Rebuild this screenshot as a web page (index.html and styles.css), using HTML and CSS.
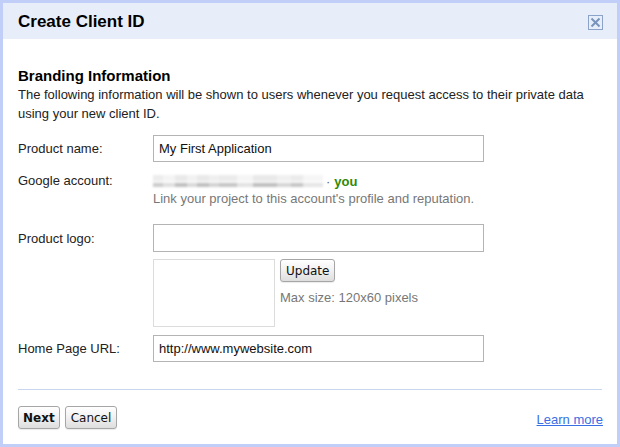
FILE: index.html
```html
<!DOCTYPE html>
<html>
<head>
<meta charset="utf-8">
<link rel="stylesheet" href="styles.css">
</head>
<body>
<div class="dialog">
  <div class="header">
    <div class="title">Create Client ID</div>
    <svg class="close" width="15" height="15" viewBox="0 0 15 15">
      <rect x="0.5" y="0.5" width="14" height="14" fill="none" stroke="#8ba3c9"/>
      <path d="M4.2 4.2 L10.8 10.8 M10.8 4.2 L4.2 10.8" stroke="#7893bd" stroke-width="2" stroke-linecap="square"/>
    </svg>
  </div>
  <div class="body">
    <h2 class="section">Branding Information</h2>
    <p class="desc">The following information will be shown to users whenever you request access to their private data using your new client ID.</p>

    <div class="form">
      <div class="row row-input">
        <div class="label">Product name:</div>
        <div class="field"><div class="input">My First Application</div></div>
      </div>

      <div class="row row-account">
        <div class="label">Google account:</div>
        <div class="field">
          <div class="account"><span class="blur"></span><span class="dot">·</span><span class="you">you</span></div>
          <div class="hint">Link your project to this account's profile and reputation.</div>
        </div>
      </div>

      <div class="row row-input row-logo">
        <div class="label">Product logo:</div>
        <div class="field"><div class="input"></div></div>
      </div>

      <div class="row row-preview">
        <div class="label"></div>
        <div class="field preview">
          <div class="logo-box"></div>
          <div class="logo-side">
            <button class="btn">Update</button>
            <div class="hint maxsize">Max size: 120x60 pixels</div>
          </div>
        </div>
      </div>

      <div class="row row-input row-url">
        <div class="label">Home Page URL:</div>
        <div class="field"><div class="input">http://www.mywebsite.com</div></div>
      </div>
    </div>

    <div class="sep"></div>

    <div class="footer">
      <div class="buttons">
        <button class="btn btn-primary">Next</button>
        <button class="btn">Cancel</button>
      </div>
      <a class="learn" href="#">Learn more</a>
    </div>
  </div>
</div>
</body>
</html>
```

FILE: styles.css
```css
html, body {
  margin: 0;
  padding: 0;
  background: #fff;
}

.dialog {
  width: 620px;
  height: 447px;
  box-sizing: border-box;
  border: 3px solid #c1cef8;
  background: #fff;
  display: flex;
  flex-direction: column;
  font-family: "Liberation Sans", Arial, sans-serif;
  font-size: 13px;
  color: #222;
}

.header {
  height: 36px;
  flex: none;
  background: #e8eef9;
  display: flex;
  align-items: center;
  justify-content: space-between;
  padding: 0 14px 0 15px;
}

.title {
  font-size: 17px;
  font-weight: bold;
  color: #000;
  margin-top: 1px;
}

.close {
  display: block;
  margin-top: 2px;
}

.body {
  flex: 1;
  padding: 0 15px;
  display: flex;
  flex-direction: column;
}

.section {
  margin: 28px 0 0 0;
  font-size: 15px;
  line-height: 18px;
  font-weight: bold;
  color: #000;
}

.desc {
  margin: 0;
  line-height: 19px;
  color: #222;
}

.form {
  margin-top: 12px;
  display: flex;
  flex-direction: column;
}

.row {
  display: grid;
  grid-template-columns: 135px 331px;
}

.row-input .label {
  align-self: center;
}

.input {
  height: 27px;
  box-sizing: border-box;
  border: 1px solid #b4b4b4;
  padding: 0 5px;
  line-height: 25px;
  color: #111;
}

.row-logo .input {
  height: 28px;
  line-height: 26px;
}

.row-account {
  margin-top: 10px;
}

.row-account .label {
  line-height: 18px;
}

.account {
  height: 18px;
  display: flex;
  align-items: center;
}

.blur {
  display: inline-block;
  width: 170px;
  height: 16px;
  background:
    linear-gradient(90deg,
      rgba(255,255,255,.2) 0 10px,
      rgba(255,255,255,.5) 10px 22px,
      rgba(255,255,255,0) 22px 34px,
      rgba(255,255,255,.4) 34px 44px,
      rgba(255,255,255,0) 44px 56px,
      rgba(255,255,255,.3) 56px 66px,
      rgba(255,255,255,.1) 66px 84px,
      rgba(255,255,255,.55) 84px 100px,
      rgba(255,255,255,0) 100px 124px,
      rgba(255,255,255,.35) 124px 138px,
      rgba(255,255,255,.1) 138px 150px,
      rgba(255,255,255,.6) 150px 170px),
    linear-gradient(180deg,
      #fff 0 2px,
      #e9e9e9 2px 8px,
      #f6f6f6 8px 10px,
      #c0c0c0 10px 14px,
      #fff 14px);
  filter: blur(1.3px);
}

.dot {
  color: #666;
  margin-left: 3px;
}

.you {
  color: #2f8a06;
  font-weight: bold;
  margin-left: 4px;
}

.hint {
  color: #777;
  line-height: 18px;
}

.row-logo {
  margin-top: 16px;
}

.row-preview {
  margin-top: 7px;
}

.preview {
  display: flex;
  align-items: flex-start;
}

.logo-box {
  width: 122px;
  height: 68px;
  box-sizing: border-box;
  border: 1px solid #dcdcdc;
}

.logo-side {
  margin-left: 5px;
  display: flex;
  flex-direction: column;
  align-items: flex-start;
}

.maxsize {
  margin-top: 7px;
}

.row-url {
  margin-top: 8px;
}

.btn {
  font-family: "DejaVu Sans", "Lucida Grande", sans-serif;
  font-size: 12px;
  height: 23px;
  padding: 0 5px;
  margin: 0;
  border: 1px solid #a6a6a6;
  border-radius: 3px;
  background: linear-gradient(#ffffff, #f2f2f2 45%, #dedede);
  color: #111;
  box-shadow: 0 1px 1px rgba(0,0,0,.08);
}

.btn-primary {
  font-weight: bold;
  padding: 0 4px;
}

.sep {
  margin-top: 27px;
  height: 1px;
  background: #c9d6ef;
}

.footer {
  margin-top: 16px;
  display: flex;
  justify-content: space-between;
  align-items: flex-end;
}

.buttons {
  display: flex;
  gap: 5px;
}

.learn {
  color: #3b6ee3;
  text-decoration: underline;
  margin-bottom: 2px;
  margin-right: -1px;
}
```
